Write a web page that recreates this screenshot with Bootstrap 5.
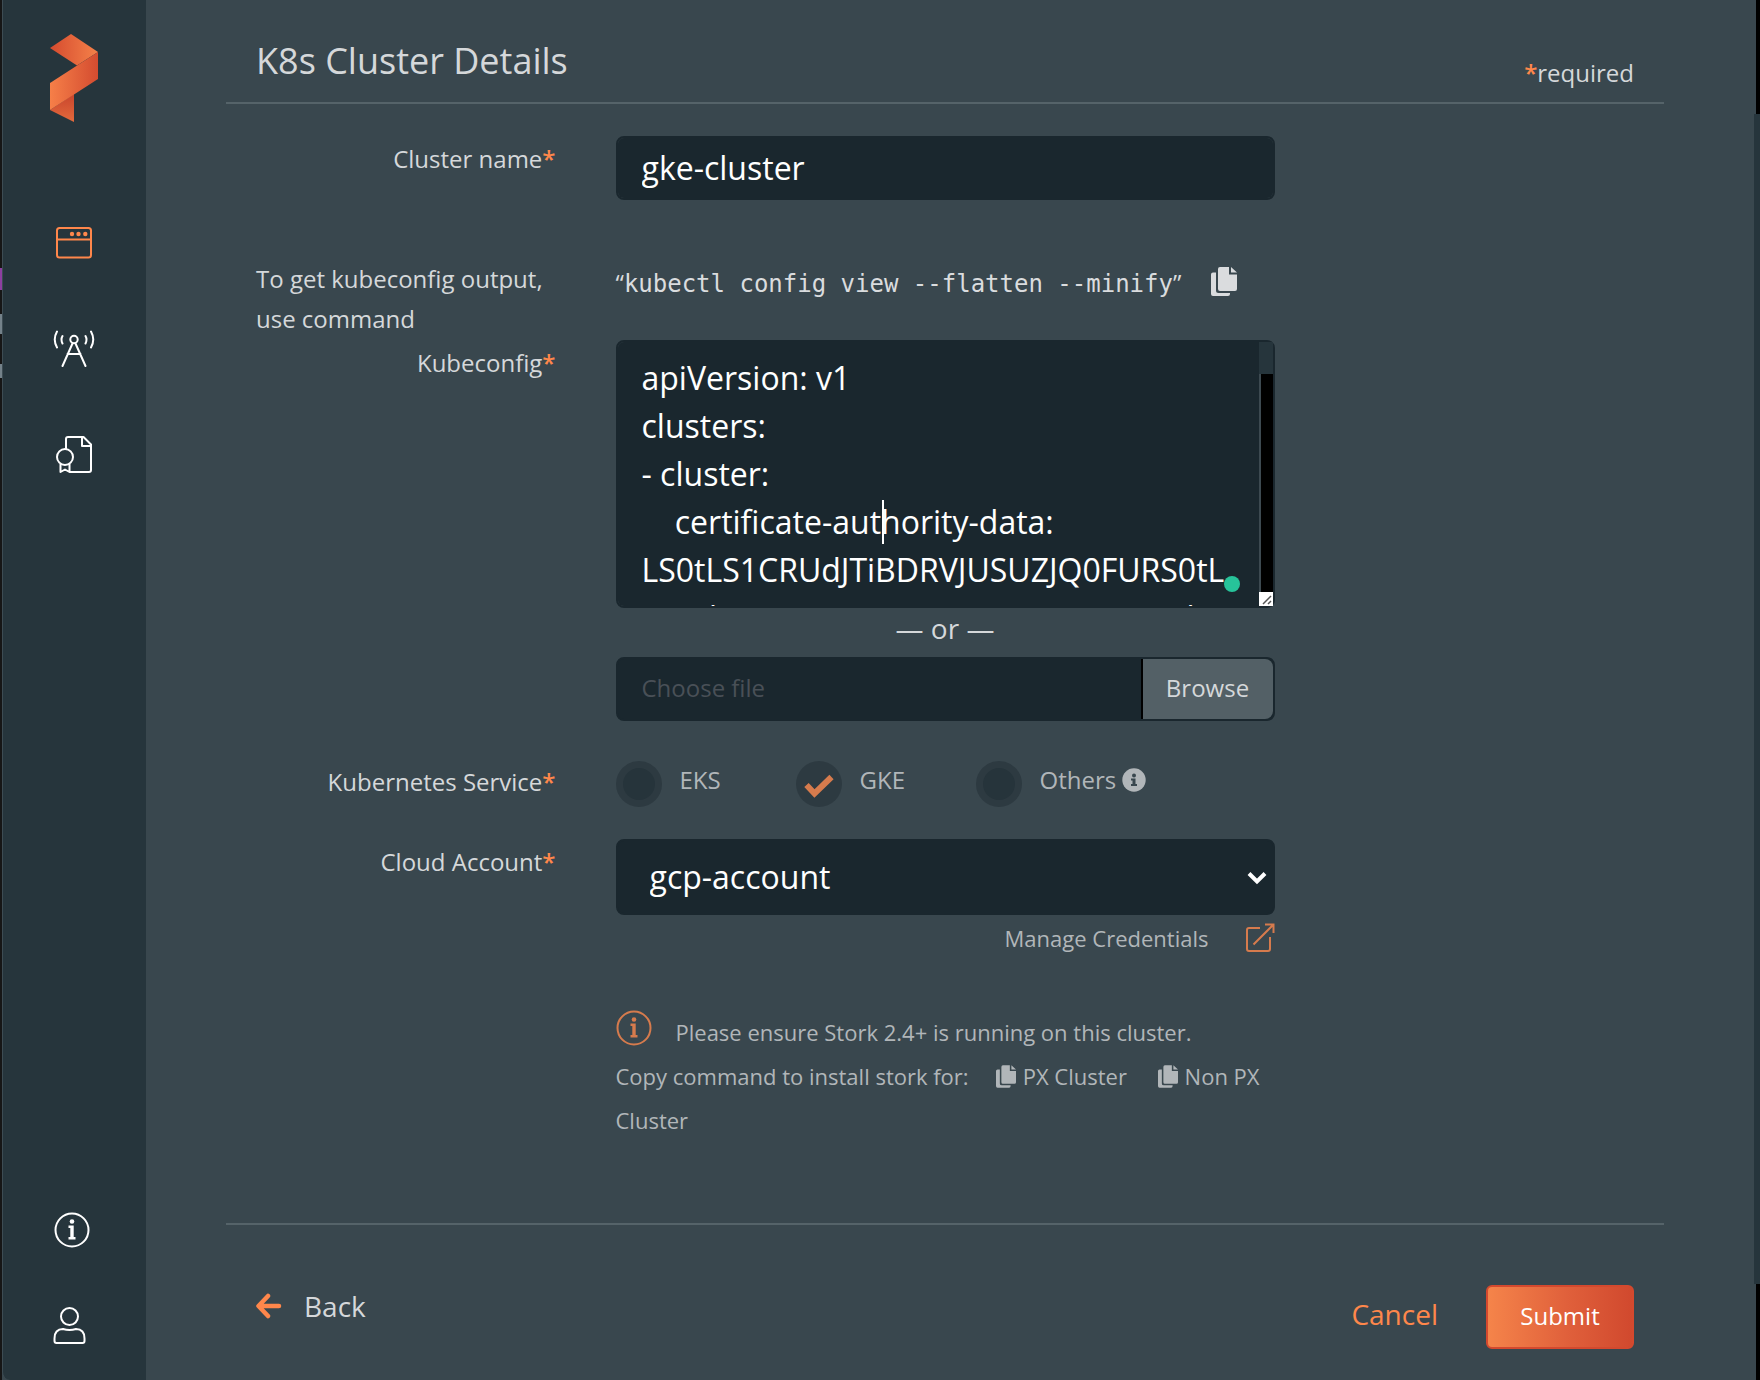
<!DOCTYPE html>
<html lang="en">
<head>
<meta charset="utf-8">
<meta name="viewport" content="width=device-width, initial-scale=1">
<title>K8s Cluster Details</title>
<link href="https://cdn.jsdelivr.net/npm/bootstrap@5.3.0/dist/css/bootstrap.min.css" rel="stylesheet">
<style>
:root { --accent: #ff874b; --muted-accent: #d67b4d; --field: #1a272e; --panel: #39474e; --side: #26353c; --soft: #b1b6b9; }
body { background: var(--panel); color: #d5d8da; font-family: "Open Sans", "Noto Sans", sans-serif; font-size: 24px; line-height: 40px; }
a { color: inherit; text-decoration: none; }
svg { flex: none; }
.edge-strip { width: 2px; background: linear-gradient(#161616 0 268px, transparent 268px 290px, #161616 290px 314px, #74828a 314px 334px, #161616 334px 364px, #74828a 364px 378px, #161616 378px) #8d3fa0; }
.side-nav { width: 144px; flex: none; background: var(--side); color: #fff; padding: 34px 1px 32px 0; border-left: 1px solid #3d4c53; border-bottom-left-radius: 8px; }
.side-main { padding-top: 99px; gap: 62px; }
.side-foot { gap: 52px; }
.side-nav a { display: flex; }
.side-nav .on { color: var(--accent); }
.content-area { padding: 0 90px 28px 80px; min-width: 0; }
.scroll-gutter { width: 6px; flex: none; padding: 114px 0 96px; background: linear-gradient(90deg, var(--panel) 2px, #000 2px); }
.scroll-gutter div { background: var(--side); }
.head-row { padding: 37px 30px 9px; border-bottom: 2px solid #556369; }
.head-row h1 { font-size: 36px; line-height: 48px; font-weight: 400; margin: 0; padding-bottom: 8px; }
.star { color: var(--accent); font-weight: 600; }
.form-body { padding-top: 32px; }
.form-body .row { --bs-gutter-x: 60px; margin: 0; }
.lbl { padding-top: 3px; text-align: right; }
.field { background-color: var(--field); border: 2px solid var(--field); border-radius: 8px; color: #fff; font-size: 32px; line-height: 48px; padding: 6px 24px; }
.field:focus { background-color: var(--field); color: #fff; border-color: var(--accent); box-shadow: none; }
.form-body .cmd-row { padding: 59px 0 1px; }
.cmd { font-family: "DejaVu Sans Mono", monospace; font-size: 24px; color: #dadcde; padding-top: 4px; gap: 30px; }
.cmd i { font-family: "Open Sans", sans-serif; font-style: normal; }
.icon-btn { background: none; border: 0; padding: 4px 0 0; color: inherit; display: flex; }
textarea.field { height: 268px; padding: 12px 36px 0 24px; resize: none; overflow: hidden; display: block; }
.area-scroll { position: absolute; right: 2px; top: 2px; bottom: 2px; width: 14px; }
.area-scroll .thumb { height: 32px; background: var(--side); }
.area-scroll .track { background: #000; border-left: 2px solid #3d4a51; }
.caret { position: absolute; left: 266px; top: 160px; width: 2px; height: 44px; background: #fff; }
.dot { position: absolute; left: 608px; top: 236px; width: 16px; height: 16px; border-radius: 50%; background: #27c39a; }
.or-line { font-size: 28px; line-height: 41px; padding-bottom: 8px; text-align: center; }
.file-box { background: var(--field); border: 2px solid var(--field); border-radius: 8px; height: 64px; cursor: pointer; color: #495057; padding-left: 24px; line-height: 58px; }
.file-box .browse { background: #536066; color: #d5d8da; border-left: 2px solid #000; border-radius: 0 8px 8px 0; width: 132px; text-align: center; }
.svc-row { padding-top: 38px; }
.svc { width: 180px; color: var(--soft); gap: 18px; padding-top: 1px; }
.svc input { appearance: none; width: 46px; height: 46px; border-radius: 50%; margin: 1px 0 0; background: #26343b; border: 7px solid #2d3a41; }
.svc input:checked { border: 0; background: #2d3a41 url("data:image/svg+xml,%3Csvg xmlns='http://www.w3.org/2000/svg' viewBox='0 0 46 46'%3E%3Cpath d='M10.500 24l8 8.500L35.500 16' fill='none' stroke='%23d67b4d' stroke-width='6'/%3E%3C/svg%3E"); }
.svc svg { vertical-align: -3px; }
.acct-row { padding-top: 32px; }
select.field { height: 76px; padding: 10px 60px 10px 32px; background-image: none; }
.chev { position: absolute; right: 8px; top: 32px; pointer-events: none; }
.manage { color: var(--soft); padding-top: 3px; gap: 36px; }
.notes { color: var(--soft); padding-top: 52px; line-height: 44px; }
.notes p { margin: 0; }
.fine-text { font-size: 22px; }
.first-note { gap: 24px; }
.px-link, .np-link { margin-left: 27px; }
.np-link { margin-left: 25px; }
.px-link svg, .np-link svg { vertical-align: -3px; margin-right: 7px; }
.foot-row { margin-top: 81px; border-top: 2px solid #556369; padding: 60px 30px 0; font-size: 28px; }
.back { gap: 22px; padding-top: 1px; }
.actions { gap: 48px; }
.cancel { background: none; border: 0; padding: 9px 0 15px; color: var(--accent); line-height: 40px; }
.submit { width: 148px; height: 64px; font-size: 24px; color: #fff; border: 2px solid #d4492e; border-radius: 6px; background: linear-gradient(90deg, #f5844a, #e0603b 55%, #d1492e); padding: 0 0 2px; }
.submit:hover { color: #fff; border-color: var(--accent); }
</style>
<script src="https://cdn.jsdelivr.net/npm/bootstrap@5.3.0/dist/js/bootstrap.bundle.min.js"></script>
</head>
<body>
<svg width="0" height="0" class="position-absolute" aria-hidden="true">
  <symbol id="copy" viewBox="0 0 26 29">
    <path d="M9 0H18V7.500H26V22a2 2 0 0 1-2 2H9a2 2 0 0 1-2-2V2a2 2 0 0 1 2-2zM20 0l6 5.500H20z" fill="currentColor"/>
    <path d="M5 5.500V23.500q0 2.500 2.500 2.500H19v1a2 2 0 0 1-2 2H2a2 2 0 0 1-2-2V7.500a2 2 0 0 1 2-2z" fill="currentColor"/>
  </symbol>
  <symbol id="info" viewBox="0 0 36 36">
    <circle cx="18" cy="18" r="16.500" fill="none" stroke="currentColor" stroke-width="2"/>
    <circle cx="18" cy="9.500" r="2.300" fill="currentColor"/>
    <path d="M14.500 13.500H19.700V25H21.500V27.500H14.500V25H16.300V16H14.500z" fill="currentColor"/>
  </symbol>
</svg>
<div class="d-flex min-vh-100">
  <div class="edge-strip"></div>
  <nav class="side-nav d-flex flex-column align-items-center justify-content-between" aria-label="Main">
    <div class="d-flex flex-column align-items-center">
      <a href="#" aria-label="Home">
        <svg width="48" height="88" viewBox="50 34 48 88">
          <defs>
            <linearGradient id="g1"><stop offset="0" stop-color="#d54b2f"/><stop offset="1" stop-color="#f58149"/></linearGradient>
            <linearGradient id="g2"><stop offset="0" stop-color="#f67f48"/><stop offset="1" stop-color="#d44c30"/></linearGradient>
            <linearGradient id="g3" x1="0" y1="1" x2="0" y2="0"><stop offset="0" stop-color="#e36a3c"/><stop offset="1" stop-color="#c9452d"/></linearGradient>
          </defs>
          <path d="M71 34L98 52L77 65.500L50 48z" fill="url(#g1)"/>
          <path d="M74 94V122L50 110z" fill="url(#g3)"/>
          <path d="M98 52V79L50 110V83z" fill="url(#g2)"/>
        </svg>
      </a>
      <div class="side-main d-flex flex-column">
        <a href="#" class="on" aria-label="Clusters">
          <svg width="44" height="44" viewBox="52 221 44 44" fill="none" stroke="currentColor" stroke-width="2"><rect x="57" y="228" width="34" height="29.500" rx="2.500"/><path d="M57 239.500H91"/><g fill="currentColor" stroke="none"><circle cx="72" cy="234" r="2.200"/><circle cx="78.500" cy="234" r="2.200"/><circle cx="85.300" cy="234" r="2.200"/></g></svg>
        </a>
        <a href="#" aria-label="Monitoring">
          <svg width="44" height="44" viewBox="52 327 44 44" fill="none" stroke="currentColor" stroke-width="2" stroke-linecap="round"><circle cx="74" cy="339.500" r="3.700"/><path d="M72.500 343.500L62.500 366M75.500 343.500L85.500 366M67.500 354H80.500M57 331.500Q52.500 339.500 57 347.500M91 331.500Q95.500 339.500 91 347.500M62.500 336Q60.500 339.500 62.500 343.500M85.500 336Q87.500 339.500 85.500 343.500"/></svg>
        </a>
        <a href="#" aria-label="Licenses">
          <svg width="44" height="44" viewBox="52 433 44 44" fill="none" stroke="currentColor" stroke-width="2" stroke-linejoin="round"><path d="M66 449V439Q66 437 68 437H83.500L91 444.500V470Q91 472 89 472H70M82 437.500V446H91"/><circle cx="65" cy="457" r="8"/><path d="M60.500 464V472L65 469.500L69.500 472V464"/></svg>
        </a>
      </div>
    </div>
    <div class="side-foot d-flex flex-column">
      <a href="#" aria-label="About"><svg width="44" height="44" viewBox="-2 -4 44 44"><use href="#info" width="36" height="36"/></svg></a>
      <a href="#" aria-label="Profile"><svg width="44" height="44" viewBox="52 1305 44 44" fill="none" stroke="currentColor" stroke-width="2"><circle cx="69.500" cy="1317.500" r="8.500"/><path d="M54.500 1342V1339.500Q54.500 1330 63 1330Q69.500 1332 76 1330Q84.500 1330 84.500 1339.500V1342Q84.500 1344 82.500 1344H56.500Q54.500 1344 54.500 1342z"/></svg></a>
    </div>
  </nav>

  <main class="content-area flex-grow-1">
    <header class="head-row d-flex justify-content-between align-items-end">
      <h1>K8s Cluster Details</h1>
      <span><span class="star">*</span>required</span>
    </header>

    <form onsubmit="return false">
      <div class="form-body">
        <div class="row">
          <div class="col-3 lbl"><label for="cname">Cluster name<span class="star">*</span></label></div>
          <div class="col-6"><input id="cname" type="text" class="form-control field" value="gke-cluster"></div>
        </div>

        <div class="row cmd-row">
          <div class="col-3">To get kubeconfig output, use command</div>
          <div class="col-6 cmd d-flex align-items-start text-nowrap">
            <span><i>“</i>kubectl config view --flatten --minify<i>”</i></span>
            <button type="button" class="icon-btn" aria-label="Copy command"><svg width="26" height="29"><use href="#copy"/></svg></button>
          </div>
        </div>

        <div class="row">
          <div class="col-3 lbl"><label for="kconf">Kubeconfig<span class="star">*</span></label></div>
          <div class="col-6">
            <div class="position-relative">
              <textarea id="kconf" class="form-control field" spellcheck="false">apiVersion: v1
clusters:
- cluster:
    certificate-authority-data: LS0tLS1CRUdJTiBDRVJUSUZJQ0FURS0tLS0tCk1JSURDVENDQWZHZ0F3SUBZ0lRZEV</textarea>
              <div class="caret"></div>
              <div class="dot"></div>
              <div class="area-scroll d-flex flex-column">
                <div class="thumb"></div>
                <div class="track flex-grow-1"></div>
                <svg width="14" height="14"><rect width="14" height="14" fill="#fff"/><path d="M4 12L12 4M9 12L12 9" stroke="#555" stroke-width="1.500"/></svg>
              </div>
            </div>
            <div class="or-line">— or —</div>
            <label for="kfile" class="file-box d-flex justify-content-between">
              <span>Choose file</span><span class="browse">Browse</span>
            </label>
            <input id="kfile" type="file" class="visually-hidden">
          </div>
        </div>

        <div class="row svc-row">
          <div class="col-3 lbl" id="svc-label">Kubernetes Service<span class="star">*</span></div>
          <div class="col-6 d-flex" role="radiogroup" aria-labelledby="svc-label">
            <div class="svc d-flex"><input type="radio" name="svc" id="eks"><label for="eks">EKS</label></div>
            <div class="svc d-flex"><input type="radio" name="svc" id="gke" checked><label for="gke">GKE</label></div>
            <div class="svc d-flex text-nowrap"><input type="radio" name="svc" id="oth"><label for="oth">Others
              <svg width="24" height="24" viewBox="0 0 24 24"><circle cx="12" cy="12" r="11.700" fill="currentColor"/><g fill="#39474e"><circle cx="12" cy="7.500" r="2"/><path d="M9 10.500H13.500V16H15V18H9V16H10.500V12.500H9z"/></g></svg></label></div>
          </div>
        </div>

        <div class="row acct-row">
          <div class="col-3 lbl"><label for="acct">Cloud Account<span class="star">*</span></label></div>
          <div class="col-6">
            <div class="position-relative">
              <select id="acct" class="form-select field"><option>gcp-account</option></select>
              <svg class="chev" width="20" height="14" fill="none" stroke="#fff" stroke-width="4"><path d="M2 2.500L10 10.500L18 2.500"/></svg>
            </div>
            <div class="manage fine-text d-flex justify-content-end align-items-center">
              <a href="#">Manage Credentials</a>
              <a href="#" class="d-flex" aria-label="Open credentials"><svg width="30" height="30" fill="none" stroke="#d67b4d" stroke-width="2"><path d="M15 5H4Q2 5 2 7V26Q2 28 4 28H23Q25 28 25 26V14M8.500 21.500L28.500 1.500M20 1.500H28.500V10"/></svg></a>
            </div>
            <div class="notes fine-text">
              <p class="first-note d-flex align-items-start"><svg width="36" height="36" color="#d67b4d"><use href="#info"/></svg><span>Please ensure Stork 2.4+ is running on this cluster.</span></p>
              <p><span>Copy command to install stork for:</span><a href="#" class="px-link"><svg width="20" height="23"><use href="#copy"/></svg>PX Cluster</a> <a href="#" class="np-link"><svg width="20" height="23"><use href="#copy"/></svg><span>Non PX</span> <span>Cluster</span></a></p>
            </div>
          </div>
        </div>
      </div>

      <footer class="foot-row d-flex justify-content-between align-items-start">
        <a href="#" class="back d-flex align-items-center">
          <svg width="26" height="26" fill="none" stroke="#ff874b" stroke-width="4.500" stroke-linecap="round" stroke-linejoin="round"><path d="M12 3L2.500 13L12 23M3 13H23"/></svg>Back
        </a>
        <div class="actions d-flex align-items-start">
          <button type="button" class="cancel">Cancel</button>
          <button type="submit" class="btn submit">Submit</button>
        </div>
      </footer>
    </form>
  </main>
  <div class="scroll-gutter d-flex"><div class="flex-grow-1"></div></div>
</div>
</body>
</html>
